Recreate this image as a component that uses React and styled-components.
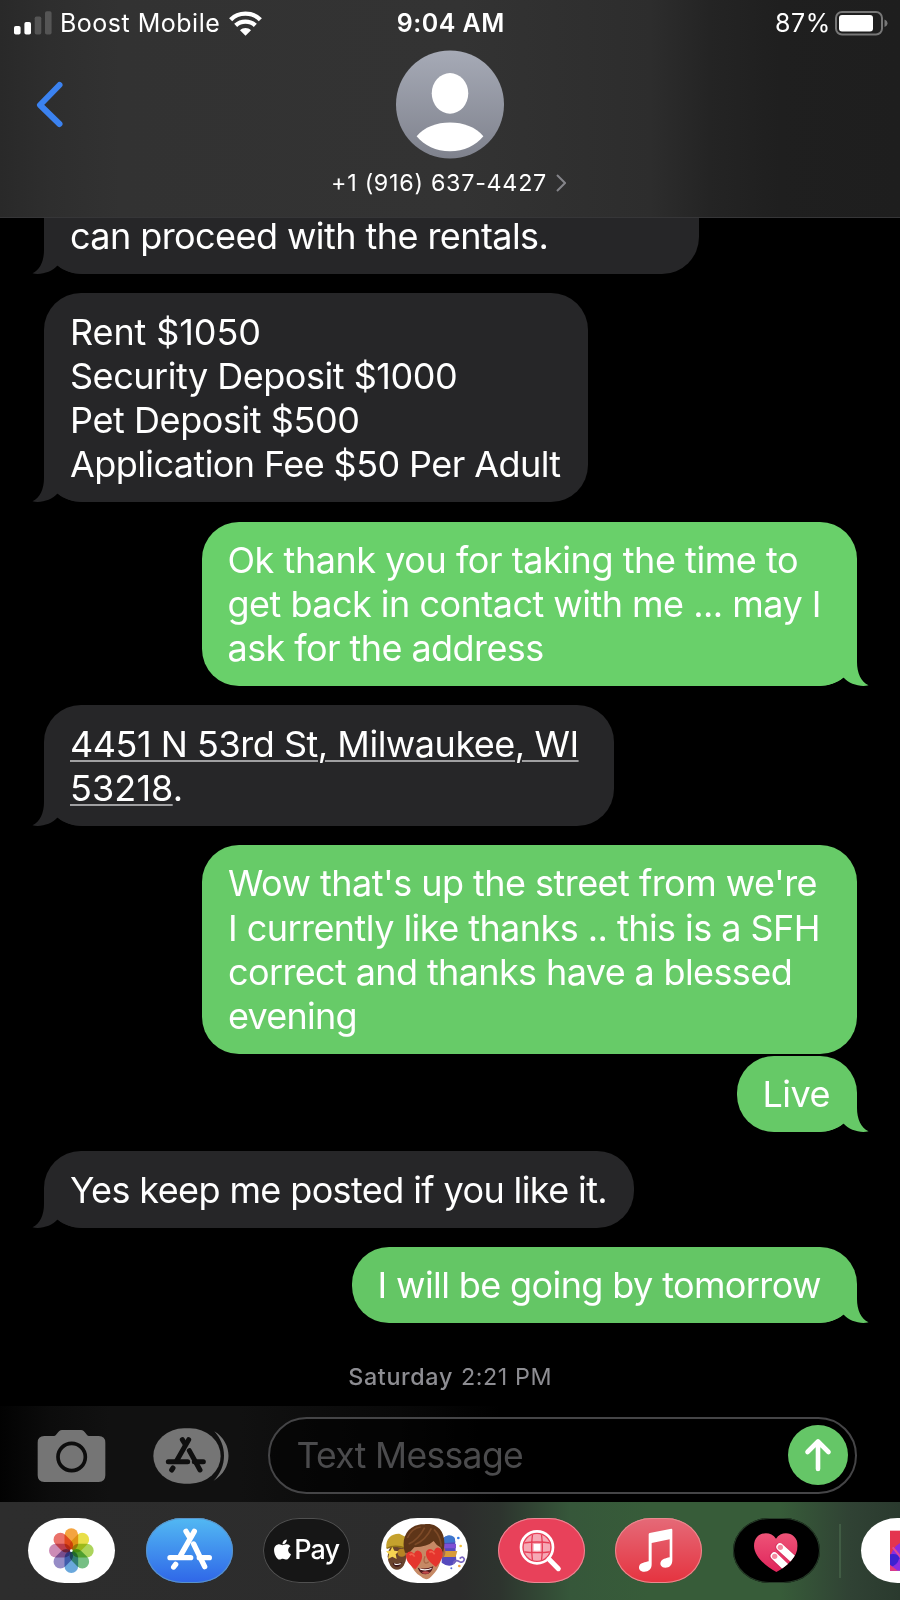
import React from "react";
import styled, { createGlobalStyle, css } from "styled-components";
import { FaApple } from "react-icons/fa";

const GlobalStyle = createGlobalStyle`
  * { box-sizing: border-box; }
  body { margin: 0; background: #000; font-family: Inter, "Liberation Sans", sans-serif; color: #fff; }
`;

const Phone = styled.div`
  width: 900px;
  height: 1600px;
  display: flex;
  flex-direction: column;
  background: #000;
  overflow: hidden;
`;

const Header = styled.header`
  flex: none;
  height: 218px;
  display: flex;
  flex-direction: column;
  border-bottom: 1px solid #363638;
  background: linear-gradient(90deg, #292929 0, #2e2e2e 50px, #323232 120px, #333 460px, #2d2d2d 650px, #242424 710px, #1f1f1f 780px, #1e1e1e 900px);
`;

const StatusBar = styled.div`
  height: 46px;
  display: grid;
  grid-template-columns: 1fr auto 1fr;
  align-items: center;
  padding: 0 12px 0 13.500px;
  font-size: 25px;
`;

const StatusGroup = styled.div`
  display: flex;
  align-items: center;
  justify-content: ${(p) => (p.$end ? "flex-end" : "flex-start")};
  gap: ${(p) => (p.$end ? "4px" : "8.5px")};
`;

const Label = styled.span`
  white-space: nowrap;
  letter-spacing: ${(p) => p.$ls || 0}px;
  font-weight: ${(p) => p.$weight || 400};
`;

const NavBar = styled.div`
  flex: 1;
  display: grid;
  grid-template-columns: 1fr auto 1fr;
  padding: 4px 37px 0 36px;
`;

const BackButton = styled.button`
  border: 0;
  padding: 31px 0 0;
  background: none;
  justify-self: start;
  align-self: start;
  line-height: 0;
`;

const Contact = styled.div`
  display: flex;
  flex-direction: column;
  align-items: center;
`;

const ContactName = styled.div`
  display: flex;
  align-items: center;
  gap: 9px;
  margin: 10px 2px 0 0;
  font-size: 23.3px;
  line-height: 28px;
`;

const Messages = styled.main`
  flex: none;
  height: 1188px;
  overflow: hidden;
  display: flex;
  flex-direction: column;
  align-items: flex-start;
  padding: 0 43.5px 0 44px;
`;

const Line = styled.div`
  position: relative;
  font-size: 36px;
  line-height: 44.2px;
  height: 44.2px;
  white-space: nowrap;
  letter-spacing: ${(p) => p.$ls || 0}px;
`;

const Bubble = styled.div`
  position: relative;
  flex: none;
  width: ${(p) => p.$w}px;
  padding: 16.3px 20px 15.7px 26px;
  border-radius: 37px;
  margin-top: ${(p) => (p.$gap === undefined ? 19.3 : p.$gap)}px;
  background: ${(p) => (p.$sent ? p.$tone || "#67cb68" : "#262628")};
  ${(p) => p.$sent && css`align-self: flex-end;`}
  ${(p) => p.$cut && css`
    padding-top: 0;
    padding-bottom: 20.2px;
    border-radius: 0 0 37px 37px;
    ${Line} { height: 36px; line-height: 36px; }
  `}
`;

const TailSvg = styled.svg`
  position: absolute;
  bottom: 0;
  ${(p) => (p.$sent ? css`right: -12px; transform: scaleX(-1);` : css`left: -12px;`)}
`;

const Link = styled.span`
  text-decoration: underline;
  text-decoration-color: #a0a0a2;
  text-decoration-thickness: 2px;
  text-underline-offset: 3px;
`;

const DateStamp = styled.div`
  display: flex;
  gap: 8px;
  align-self: center;
  margin-top: 39.5px;
  font-size: 23.3px;
  line-height: 28px;
  color: #8d8d92;
`;

const Composer = styled.div`
  flex: none;
  height: 96px;
  display: flex;
  align-items: center;
  padding: 2px 43px 0 37px;
  background: linear-gradient(90deg, #020202 0, #0c0c0c 50px, #111 110px, #111 240px, #090909 400px, #000 500px);
`;

const Field = styled.div`
  margin-left: 37.5px;
  width: 589px;
  height: 77px;
  display: flex;
  align-items: center;
  justify-content: space-between;
  padding: 0 7px 0 27px;
  border: 2px solid #454547;
  border-radius: 39px;
  background: rgba(0, 0, 0, 0.55);
  color: #4b4b4d;
  font-size: 35.5px;
`;

const SendButton = styled.button`
  width: 60px;
  height: 60px;
  border: 0;
  padding: 0;
  border-radius: 50%;
  background: #65c667;
  line-height: 0;
`;

const Dock = styled.nav`
  flex: none;
  height: 98px;
  display: flex;
  padding: 16px 0 0 28.4px;
  overflow: hidden;
  background: linear-gradient(90deg, #2d2d2d 0, #2c2c2c 460px, #2d342e 500px, #36573a 570px, #375c39 650px, #375c39 780px, #304234 850px, #2a3a2e 900px);
`;

const AppPill = styled.div`
  flex: none;
  width: 87px;
  height: 65px;
  margin-right: 30.4px;
  border-radius: 37px / 33px;
  overflow: hidden;
  line-height: 0;
  background: ${(p) => p.$bg || "#fff"};
  box-shadow: ${(p) => (p.$rim ? `inset 0 0 0 1px ${p.$rim}` : "none")};
`;

const PayMark = styled.div`
  height: 63px;
  display: flex;
  align-items: center;
  justify-content: center;
  padding-right: 3px;
  font-size: 27px;
  line-height: 30px;
`;

const Divider = styled.div`
  flex: none;
  width: 2px;
  height: 54px;
  margin: 6px 19.5px 0 -11px;
  background: #415c44;
`;

const Tail = ({ sent, color }) => (
  <TailSvg $sent={sent} width="50" height="38" viewBox="0 0 50 38">
    <path d="M0 38 H50 V38 C41 38 33 35 25.5 30 L25 38 Z" fill="#000" />
    <path d="M12 0 V14 C12 25 8 34 .5 37.2 C8 39.5 20 36 25.5 29.5 C32 35 41 38 50 38 V0 Z" fill={color} />
  </TailSvg>
);

const Signal = () => (
  <svg width="38" height="24" viewBox="0 0 38 24">
    <rect x="0" y="15" width="6.6" height="8.6" rx="1.8" fill="#fff" />
    <rect x="10.4" y="11" width="6.6" height="12.6" rx="1.8" fill="#fff" />
    <rect x="20.7" y="5.5" width="6.6" height="18.1" rx="1.8" fill="#555" />
    <rect x="31" y="0.3" width="6.6" height="23.3" rx="1.8" fill="#555" />
  </svg>
);

const Wifi = () => (
  <svg width="33" height="25" viewBox="0 0 99 75">
    <g fill="none" stroke="#fff" strokeWidth="13">
      <path d="M5 26 C28 2 71 2 94 26" />
      <path d="M20 43 C36 28 63 28 79 43" />
    </g>
    <path d="M33 58 C42 49 57 49 66 58 L49.500 74 Z" fill="#fff" />
  </svg>
);

const Battery = () => (
  <svg width="53" height="25" viewBox="0 0 53 25">
    <rect x="1" y="1" width="46" height="22.500" rx="6" fill="none" stroke="#777" strokeWidth="2" />
    <rect x="4" y="4" width="34" height="16.500" rx="3" fill="#fff" />
    <path d="M49.500 8.500 C53.500 10 53.500 14.500 49.500 16 Z" fill="#777" />
  </svg>
);

const Avatar = () => (
  <svg width="108" height="109" viewBox="0 0 325 325">
    <defs>
      <linearGradient id="av" x1="0" y1="0" x2="0" y2="1">
        <stop offset="0" stopColor="#a6aab6" />
        <stop offset="1" stopColor="#7f828d" />
      </linearGradient>
    </defs>
    <circle cx="162.500" cy="162.500" r="162.500" fill="url(#av)" />
    <ellipse cx="162.500" cy="129" rx="55" ry="61" fill="#fff" />
    <path d="M62 258 C85 231 122 217 162.500 217 C203 217 240 231 263 258 C240 286 205 303 162.500 303 C120 303 85 286 62 258 Z" fill="#fff" />
  </svg>
);

const StoreGlyph = ({ color }) => (
  <g fill="none" stroke={color} strokeWidth="16" strokeLinecap="round">
    <path d="M145 40 L104 112" />
    <path d="M120 40 L130 57" />
    <path d="M143 78 L176 146" />
    <path d="M72 119 H134" />
    <path d="M160 119 H190" />
    <path d="M89 139 L83 147" />
  </g>
);

const Camera = () => (
  <svg width="69" height="53" viewBox="0 0 207 159">
    <path d="M22 21 H51 C60 21 62 3 75 3 H132 C145 3 147 21 156 21 H185 Q205 21 205 41 V139 Q205 159 185 159 H22 Q2 159 2 139 V41 Q2 21 22 21 Z" fill="#757575" />
    <circle cx="104" cy="84" r="41" fill="none" stroke="#0d0d0d" strokeWidth="11" />
  </svg>
);

const AppsToggleSvg = styled.svg`
  margin: 1px 0 0 47px;
`;

const AppsToggle = () => (
  <AppsToggleSvg width="77" height="56" viewBox="0 0 231 168">
    <rect x="1" y="1" width="202" height="166" rx="92" ry="83" fill="#757575" />
    <path d="M184 10 C241 45 241 123 182 158 C223 116 223 52 184 10 Z" fill="#757575" />
    <g fill="none" stroke="#0f0f0f" strokeWidth="15" strokeLinecap="round">
      <path d="M107 35 L71 98" />
      <path d="M88 35 L96 48" />
      <path d="M109 68 L141 126" />
      <path d="M46 101 H104" />
      <path d="M124 101 H151" />
      <path d="M60 120 L56 126" />
    </g>
  </AppsToggleSvg>
);

const petals = ["#f39a2b", "#e6dc35", "#a3cf4a", "#67b877", "#5a9fd8", "#8b7fc0", "#c77fae", "#e8625a"];

const Petal = styled.rect`
  mix-blend-mode: multiply;
`;

const Photos = () => (
  <svg width="87" height="65" viewBox="0 0 261 195">
    <g transform="translate(130 98)">
      {petals.map((c, i) => (
        <Petal key={c} x="-20.500" y="-67" width="41" height="66" rx="20.500" fill={c} fillOpacity=".9" transform={`rotate(${i * 45})`} />
      ))}
      <circle r="4" fill="#fff" />
    </g>
  </svg>
);

const Memoji = () => (
  <svg width="87" height="65" viewBox="0 0 261 195">
    <ellipse cx="48" cy="115" rx="28" ry="40" fill="#69432d" />
    <path d="M16 91 C13 61 32 46 55 47 L76 58 V94 C54 85 35 84 16 91 Z" fill="#c5a12d" />
    <path d="M17 91 C35 82 54 83 76 91" fill="none" stroke="#917116" strokeWidth="4" />
    <path d="M34 86 l6 12 14 2 -10 9 3 14 -13 -7 -13 7 3 -14 -9 -9 13 -2Z" fill="#f6d451" />
    <circle cx="62" cy="104" r="12" fill="#b68524" />
    <path d="M35 134 Q48 142 62 132 Q58 148 47 146 Q37 145 35 134 Z" fill="#3e1518" />
    <path d="M39 136 Q48 140 59 135 V139 Q48 143 41 140 Z" fill="#fff" />
    <path d="M182 67 Q200 43 222 62 L226 131 Q208 154 182 134 Z" fill="#554abd" />
    <path d="M184 63 Q203 44 220 58 L223 73 L184 76 Z" fill="#3e76cd" />
    <path d="M182 78 H225 V91 H182 Z" fill="#7f50d4" />
    <path d="M187 99 H229 L224 117 H187 Z" fill="#d79b39" />
    <path d="M217 138 Q220 122 236 131 Q248 136 250 123 Q245 112 236 122" fill="none" stroke="#7864bf" strokeWidth="5" />
    <circle cx="232" cy="60" r="4" fill="#357ce6" />
    <circle cx="239" cy="84" r="4" fill="#f2c13d" />
    <circle cx="235" cy="144" r="4" fill="#f2a23d" />
    <circle cx="211" cy="151" r="3" fill="#596bd3" />
    <ellipse cx="81" cy="102" rx="9" ry="17" fill="#a76b4c" />
    <ellipse cx="184" cy="102" rx="9" ry="17" fill="#a76b4c" />
    <path d="M80 77 Q91 40 133 45 Q175 44 182 78 C187 118 174 154 155 171 Q137 194 119 175 C91 158 75 116 80 77 Z" fill="#c68965" />
    <path d="M72 104 C57 60 82 17 130 19 C174 13 201 48 186 105 Q182 95 178 88 Q165 81 158 69 Q139 87 100 88 L84 105 Z" fill="#5e3518" />
    <path d="M83 78 Q112 66 131 29 M101 80 Q135 66 151 31 M159 34 Q179 55 181 86 M79 60 Q93 30 119 27" fill="none" stroke="#7d4a27" strokeWidth="5" />
    <path d="M103 154 C80 136 71 120 77 107 Q86 94 99 107 Q107 91 120 103 C130 119 117 138 103 154 Z" fill="#e5352d" />
    <path d="M165 147 C143 132 131 116 136 100 Q146 86 159 100 Q166 81 181 94 C192 111 179 133 165 147 Z" fill="#e5352d" />
    <path d="M86 111 Q94 104 101 116 M145 103 Q153 97 161 109" fill="none" stroke="#f4604c" strokeWidth="5" />
    <path d="M132 115 Q126 131 133 135 Q140 136 143 131" fill="none" stroke="#a96a48" strokeWidth="4" />
    <path d="M110 149 Q132 156 157 145 Q151 169 134 169 Q117 169 110 149 Z" fill="#541c1e" />
    <path d="M115 151 Q134 157 153 149 L150 154 Q134 160 118 155 Z" fill="#fff" />
    <path d="M122 164 Q133 156 146 164 Q134 171 122 164 Z" fill="#c04a4a" />
  </svg>
);

const ImageSearch = () => (
  <svg width="87" height="65" viewBox="0 0 261 195">
    <clipPath id="globe"><circle cx="117" cy="88" r="40" /></clipPath>
    <g clipPath="url(#globe)">
      <rect x="76" y="47" width="82" height="82" fill="#f6a9b5" />
      <rect x="107" y="78" width="20" height="20" fill="#fff" />
      <g fill="none" stroke="#e63f57" strokeWidth="4">
        <path d="M104 45 Q98 88 104 132 M130 45 Q136 88 130 132 M74 75 Q117 69 160 75 M74 101 Q117 107 160 101" />
      </g>
    </g>
    <circle cx="117" cy="88" r="48" fill="none" stroke="#fff" strokeWidth="8" />
    <path d="M153 124 L181 152" stroke="#fff" strokeWidth="15" strokeLinecap="round" />
  </svg>
);

const Music = () => (
  <svg width="87" height="65" viewBox="0 0 261 195">
    <path d="M101 49 Q101 46 104 45 L169 32 Q172 32 172 36 V126 C172 142 163 149 151 149 C139 149 134 140 137 132 C141 123 151 121 164 118 V64 L110 75 V139 C110 154 101 161 88 161 C76 161 69 153 73 143 C77 134 91 133 101 130 Z" fill="#fff" />
  </svg>
);

const HeartTouch = () => (
  <svg width="87" height="65" viewBox="0 0 261 195">
    <defs>
      <linearGradient id="ht" x1="0" y1="0" x2="0" y2="1">
        <stop offset="0" stopColor="#ee5578" />
        <stop offset="1" stopColor="#e0245b" />
      </linearGradient>
      <clipPath id="hc"><path d="M130 162 C97 144 64 116 63 84 C63 42 111 34 129 62 C147 34 194 43 194 83 C194 116 163 144 130 162 Z" /></clipPath>
    </defs>
    <g clipPath="url(#hc)">
      <rect x="60" y="40" width="140" height="125" fill="url(#ht)" />
      <g strokeLinecap="round">
        <path d="M139 87 L192 132 M122 114 L164 153" stroke="#a91e43" strokeWidth="26" opacity=".3" />
        <path d="M141 87 L200 141 M124 114 L170 158" stroke="#fff" strokeWidth="22" />
      </g>
      <circle cx="142" cy="88" r="8" fill="#f58aa0" />
      <circle cx="125" cy="115" r="8" fill="#f58aa0" />
    </g>
  </svg>
);

const Artwork = () => (
  <svg width="87" height="65" viewBox="0 0 261 195">
    <rect x="87" y="38" width="120" height="120" fill="#e4354f" />
    <path d="M87 120 Q94 78 140 65 V158 H87 Z" fill="#8d2de0" />
    <path d="M87 109 Q111 104 115 121 Q109 143 87 148 Z" fill="#3d21d0" />
    <path d="M95 88 L125 124" stroke="#e24a92" strokeWidth="6" />
    <path d="M87 140 L110 158 H87 Z" fill="#e83a79" />
  </svg>
);

const received = "#262628";
const thread = [
  { w: 655, cut: true, gap: 0, tail: true, lines: [["can proceed with the rentals.", -0.57]] },
  { w: 543.5, tail: true, lines: [["Rent $1050", -0.1], ["Security Deposit $1000", -0.48], ["Pet Deposit $500", -0.42], ["Application Fee $50 Per Adult", -0.58]] },
  { w: 655, sent: true, tail: true, tone: "#69d06a", lines: [["Ok thank you for taking the time to", -0.45], ["get back in contact with me ... may I", -0.52], ["ask for the address", -0.57]] },
  { w: 570, tail: true, lines: [["4451 N 53rd St, Milwaukee, WI", -0.48, "link"], ["53218", 0.1, "link", "."]] },
  { w: 654.5, sent: true, tone: "#67cb68", lines: [["Wow that's up the street from we're", -0.54], ["I currently like thanks .. this is a SFH", -0.55], ["correct and thanks have a blessed", -0.62], ["evening", -0.75]] },
  { w: 120, gap: 2.2, sent: true, tail: true, tone: "#66c967", lines: [["Live", -0.5]] },
  { w: 590, tail: true, lines: [["Yes keep me posted if you like it.", -0.61]] },
  { w: 505, sent: true, tail: true, tone: "#64c665", lines: [["I will be going by tomorrow", -0.61]] },
];

export default function App() {
  return (
    <>
      <GlobalStyle />
      <Phone>
        <Header>
          <StatusBar>
            <StatusGroup><Signal /><Label $ls={0.5}>Boost Mobile</Label><Wifi /></StatusGroup>
            <Label $weight={600} $ls={0.5}>9:04 AM</Label>
            <StatusGroup $end><Label $ls={0.6}>87%</Label><Battery /></StatusGroup>
          </StatusBar>
          <NavBar>
            <BackButton><svg width="28" height="48" viewBox="0 0 28 48"><path d="M23.500 4 L4 24 L23.500 43" fill="none" stroke="#3b82f0" strokeWidth="6" strokeLinecap="round" strokeLinejoin="round" /></svg></BackButton>
            <Contact>
              <Avatar />
              <ContactName><Label $ls={0.73}>+1 (916) 637-4427</Label><svg width="10" height="18" viewBox="0 0 10 18"><path d="M1 1 L9 9 L1 17" fill="none" stroke="#85858a" strokeWidth="2" /></svg></ContactName>
            </Contact>
          </NavBar>
        </Header>
        <Messages>
          {thread.map((b, i) => (
            <Bubble key={i} $w={b.w} $sent={b.sent} $cut={b.cut} $gap={b.gap} $tone={b.tone}>
              {b.tail && <Tail sent={b.sent} color={b.sent ? b.tone : received} />}
              {b.lines.map(([text, ls, link, rest]) => (
                <Line key={text} $ls={ls}>{link ? <Link>{text}</Link> : text}{rest}</Line>
              ))}
            </Bubble>
          ))}
          <DateStamp><Label $weight={500} $ls={0.65}>Saturday</Label><Label $ls={0.6}>2:21 PM</Label></DateStamp>
        </Messages>
        <Composer>
          <Camera />
          <AppsToggle />
          <Field>
            <Label $ls={-0.65}>Text Message</Label>
            <SendButton><svg width="60" height="60" viewBox="0 0 60 60"><path d="M30 44 V17 M19.500 27 L30 16.500 L40.500 27" fill="none" stroke="#fff" strokeWidth="4.600" strokeLinecap="round" strokeLinejoin="round" /></svg></SendButton>
          </Field>
        </Composer>
        <Dock>
          <AppPill><Photos /></AppPill>
          <AppPill $bg="linear-gradient(#52b9f3, #2f66e8)" $rim="#5a93c8"><svg width="87" height="65" viewBox="0 0 261 195"><StoreGlyph color="#fff" /></svg></AppPill>
          <AppPill $bg="#161616" $rim="#505050"><PayMark><FaApple size={23} /><Label $weight={500} $ls={-0.9}>Pay</Label></PayMark></AppPill>
          <AppPill><Memoji /></AppPill>
          <AppPill $bg="#e8415a" $rim="#e88a96"><ImageSearch /></AppPill>
          <AppPill $bg="linear-gradient(#e56a78, #e5333f)" $rim="#e88a8f"><Music /></AppPill>
          <AppPill $bg="#000" $rim="#263b28"><HeartTouch /></AppPill>
          <Divider />
          <AppPill><Artwork /></AppPill>
        </Dock>
      </Phone>
    </>
  );
}
